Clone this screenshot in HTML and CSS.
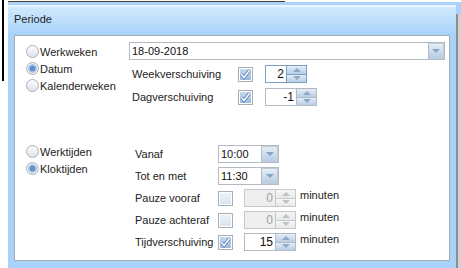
FILE: index.html
```html
<!DOCTYPE html>
<html lang="nl">
<head>
    <meta charset="UTF-8">
    <title>Periode</title>
    <link rel="stylesheet" href="styles.css">
</head>
<body>

<div class="window">
    <div class="title">Periode</div>

    <div class="panel">
        <!-- Weken -->
        <div class="section section-week">
            <div class="radios">
                <div class="radio"><span class="dot"></span>Werkweken</div>
                <div class="radio"><span class="dot on"></span>Datum</div>
                <div class="radio"><span class="dot"></span>Kalenderweken</div>
            </div>
            <div class="fields">
                <div class="combo combo-date">
                    <span class="value">18-09-2018</span>
                    <span class="btn"><span class="tri-down"></span></span>
                </div>
                <div class="row">
                    <span class="label">Weekverschuiving</span>
                    <span class="check on"><svg width="13" height="13" viewBox="0 0 13 13"><path d="M2.5 6.5 L5 9.5 L10.5 2.5" fill="none" stroke="#4f7cb0" stroke-width="3.2"/><path d="M2.5 6.5 L5 9.5 L10.5 2.5" fill="none" stroke="#fff" stroke-width="1.6"/></svg></span>
                    <span class="spin focus sp-small">
                        <span class="num">2</span>
                        <span class="arrows"><span class="up"><span class="tri-up"></span></span><span class="down"><span class="tri-dn"></span></span></span>
                    </span>
                </div>
                <div class="row">
                    <span class="label">Dagverschuiving</span>
                    <span class="check on"><svg width="13" height="13" viewBox="0 0 13 13"><path d="M2.5 6.5 L5 9.5 L10.5 2.5" fill="none" stroke="#4f7cb0" stroke-width="3.2"/><path d="M2.5 6.5 L5 9.5 L10.5 2.5" fill="none" stroke="#fff" stroke-width="1.6"/></svg></span>
                    <span class="spin">
                        <span class="num">-1</span>
                        <span class="arrows"><span class="up"><span class="tri-up"></span></span><span class="down"><span class="tri-dn"></span></span></span>
                    </span>
                </div>
            </div>
        </div>

        <!-- Tijden -->
        <div class="section section-time">
            <div class="radios">
                <div class="radio"><span class="dot"></span>Werktijden</div>
                <div class="radio"><span class="dot on"></span>Kloktijden</div>
            </div>
            <div class="fields">
                <div class="row">
                    <span class="label">Vanaf</span>
                    <span class="combo combo-time">
                        <span class="value">10:00</span>
                        <span class="btn"><span class="tri-down"></span></span>
                    </span>
                </div>
                <div class="row">
                    <span class="label">Tot en met</span>
                    <span class="combo combo-time">
                        <span class="value">11:30</span>
                        <span class="btn"><span class="tri-down"></span></span>
                    </span>
                </div>
                <div class="row">
                    <span class="label">Pauze vooraf</span>
                    <span class="check"></span>
                    <span class="spin off">
                        <span class="num">0</span>
                        <span class="arrows"><span class="up"><span class="tri-up"></span></span><span class="down"><span class="tri-dn"></span></span></span>
                    </span>
                    <span class="unit">minuten</span>
                </div>
                <div class="row">
                    <span class="label">Pauze achteraf</span>
                    <span class="check"></span>
                    <span class="spin off">
                        <span class="num">0</span>
                        <span class="arrows"><span class="up"><span class="tri-up"></span></span><span class="down"><span class="tri-dn"></span></span></span>
                    </span>
                    <span class="unit">minuten</span>
                </div>
                <div class="row">
                    <span class="label">Tijdverschuiving</span>
                    <span class="check on"><svg width="13" height="13" viewBox="0 0 13 13"><path d="M2.5 6.5 L5 9.5 L10.5 2.5" fill="none" stroke="#4f7cb0" stroke-width="3.2"/><path d="M2.5 6.5 L5 9.5 L10.5 2.5" fill="none" stroke="#fff" stroke-width="1.6"/></svg></span>
                    <span class="spin">
                        <span class="num">15</span>
                        <span class="arrows"><span class="up"><span class="tri-up"></span></span><span class="down"><span class="tri-dn"></span></span></span>
                    </span>
                    <span class="unit">minuten</span>
                </div>
            </div>
        </div>
    </div>
</div>

</body>
</html>
```

FILE: styles.css
```css
* {
    margin: 0;
    padding: 0;
    box-sizing: border-box;
}

body {
    width: 461px;
    height: 268px;
    overflow: hidden;
    font-family: 'Liberation Sans', Arial, sans-serif;
    font-size: 11px;
    color: #222;
    background:
        linear-gradient(#000, #000) 2px 0 / 2px 81px no-repeat,
        linear-gradient(#5a3a22, #5a3a22) 8px 1px / 277px 1px no-repeat,
        linear-gradient(#a9d3fb, #a9d3fb) 456px 2px / 5px 12px no-repeat,
        linear-gradient(#8d8d8d, #8d8d8d) 456px 14px / 2px 254px no-repeat,
        linear-gradient(#d2d2d2, #d2d2d2) 458px 14px / 3px 254px no-repeat,
        #fff;
}

.window {
    margin: 2px 0 0 8px;
    width: 448px;
    height: 266px;
    padding-top: 3px;
    background-color: #a9d3fb;
}

.title {
    border-top: 2px solid #e9f4fe;
    height: 30px;
    line-height: 25px;
    padding-left: 6px;
    background: linear-gradient(#d0e8fd, #a9d3fb);
    color: #1e1e1e;
}

.panel {
    margin-left: 6px;
    width: 436px;
    height: 226px;
    border: 1px solid #a7adb3;
    background-color: #fff;
}

.section {
    display: flex;
    padding-left: 11px;
}

.section-week {
    padding-top: 6px;
}

.section-time {
    margin-top: 38px;
}

.radios {
    display: flex;
    flex-direction: column;
}

.section-week .radios {
    width: 103px;
    margin-top: 1px;
}

.section-time .radios {
    width: 109px;
    margin-top: -1px;
}

.radio {
    display: flex;
    align-items: center;
    height: 17px;
}

.dot {
    width: 13px;
    height: 13px;
    margin-right: 1px;
    border: 1px solid #aab2bb;
    border-radius: 50%;
    background: linear-gradient(#fbfcfd, #dde3ea);
}

.dot.on {
    background: radial-gradient(circle, #5f91c8 0 2.5px, #9fc0e3 3px 4px, #eaf1f8 4.5px);
}

.fields {
    display: flex;
    flex-direction: column;
}

.section-week .fields {
    gap: 5px;
}

.section-time .fields {
    gap: 4px;
    margin-top: 1px;
}

.row {
    display: flex;
    align-items: center;
    height: 18px;
}

.section-week .label {
    width: 109px;
    padding-left: 3px;
}

.section-time .label {
    width: 83px;
}

/* combobox */
.combo {
    display: flex;
    height: 18px;
    border: 1px solid #b3bac4;
    background-color: #fff;
}

.combo .value {
    flex: 1;
    padding-left: 2px;
    line-height: 16px;
    color: #111;
}

.combo-date {
    width: 316px;
}

.combo-time {
    width: 61px;
}

.combo .btn {
    width: 17px;
    display: flex;
    align-items: center;
    justify-content: center;
    border: 1px solid #c3ccd6;
    border-left-color: #b3bac4;
    background: linear-gradient(#e4edf7, #b7cde4);
}

.combo-date .btn {
    width: 16px;
}

.tri-down {
    border-left: 4px solid transparent;
    border-right: 4px solid transparent;
    border-top: 4px solid #88a4c5;
}

/* checkbox */
.check {
    width: 15px;
    height: 15px;
    margin-right: 12px;
    border: 1px solid #a8aeb6;
    box-shadow: inset 0 0 0 1px #fff;
    background: linear-gradient(#eef3f9, #d8e3ef);
    display: flex;
    align-items: center;
    justify-content: center;
}

.check.on {
    background: linear-gradient(#cadcf0, #98b9dc);
}

.section-time .check {
    margin-right: 11px;
}

/* spinner */
.spin {
    display: flex;
    width: 52px;
    height: 18px;
    border: 1px solid #b3bac4;
    background-color: #fff;
}

.spin.sp-small {
    width: 42px;
}

.spin .num {
    flex: 1;
    text-align: right;
    padding-right: 2px;
    line-height: 17px;
    font-size: 12px;
    color: #111;
}

.spin .arrows {
    width: 20px;
    display: flex;
    flex-direction: column;
    border-left: 1px solid #b3bac4;
}

.spin .up,
.spin .down {
    flex: 1;
    display: flex;
    align-items: center;
    justify-content: center;
    background: linear-gradient(#e4edf7, #b9cee5);
}

.spin .down {
    border-top: 1px solid #b3bac4;
}

.tri-up {
    border-left: 4px solid transparent;
    border-right: 4px solid transparent;
    border-bottom: 4px solid #8ea8c7;
}

.tri-dn {
    border-left: 4px solid transparent;
    border-right: 4px solid transparent;
    border-top: 4px solid #8ea8c7;
}

.spin.focus,
.spin.focus .arrows,
.spin.focus .down {
    border-color: #7c9ec3;
}

.spin.off {
    border-color: #c6c9cc;
}

.spin.off .num {
    background-color: #eeeeee;
    color: #a2a2a2;
}

.spin.off .arrows,
.spin.off .down {
    border-color: #c6c9cc;
}

.spin.off .up,
.spin.off .down {
    background: linear-gradient(#f7f7f7, #e8e8e8);
}

.spin.off .tri-up {
    border-bottom-color: #c2c2c2;
}

.spin.off .tri-dn {
    border-top-color: #c2c2c2;
}

.unit {
    align-self: flex-start;
    margin-left: 4px;
    line-height: 13px;
}
```
